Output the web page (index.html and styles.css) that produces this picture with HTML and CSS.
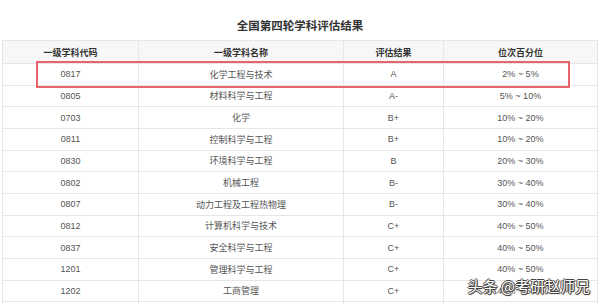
FILE: index.html
```html
<!DOCTYPE html>
<html lang="zh">
<head>
<meta charset="utf-8">
<link rel="stylesheet" href="styles.css">
</head>
<body>
<div class="page">
  <h1 class="title">全国第四轮学科评估结果</h1>
  <table class="grid">
    <colgroup>
      <col class="c1"><col class="c2"><col class="c3"><col class="c4">
    </colgroup>
    <thead>
      <tr><th>一级学科代码</th><th>一级学科名称</th><th>评估结果</th><th>位次百分位</th></tr>
    </thead>
    <tbody>
      <tr><td>0817</td><td>化学工程与技术</td><td>A</td><td>2% ~ 5%</td></tr>
      <tr><td>0805</td><td>材料科学与工程</td><td>A-</td><td>5% ~ 10%</td></tr>
      <tr><td>0703</td><td>化学</td><td>B+</td><td>10% ~ 20%</td></tr>
      <tr><td>0811</td><td>控制科学与工程</td><td>B+</td><td>10% ~ 20%</td></tr>
      <tr><td>0830</td><td>环境科学与工程</td><td>B</td><td>20% ~ 30%</td></tr>
      <tr><td>0802</td><td>机械工程</td><td>B-</td><td>30% ~ 40%</td></tr>
      <tr><td>0807</td><td>动力工程及工程热物理</td><td>B-</td><td>30% ~ 40%</td></tr>
      <tr><td>0812</td><td>计算机科学与技术</td><td>C+</td><td>40% ~ 50%</td></tr>
      <tr><td>0837</td><td>安全科学与工程</td><td>C+</td><td>40% ~ 50%</td></tr>
      <tr><td>1201</td><td>管理科学与工程</td><td>C+</td><td>40% ~ 50%</td></tr>
      <tr><td>1202</td><td>工商管理</td><td>C+</td><td>40% ~ 50%</td></tr>
      <tr><td>&nbsp;</td><td></td><td></td><td></td></tr>
    </tbody>
  </table>
  <div class="highlight"></div>
  <div class="watermark">头条 @考研赵师兄</div>
</div>
</body>
</html>
```
FILE: styles.css
```css
html, body {
  margin: 0;
  padding: 0;
  background: #ffffff;
}
body {
  width: 600px;
  height: 304px;
  overflow: hidden;
  font-family: "Liberation Sans", "Noto Sans CJK SC", sans-serif;
}
.page {
  position: relative;
  width: 600px;
  height: 304px;
  overflow: hidden;
}
.title {
  margin: 0;
  height: 40px;
  box-sizing: border-box;
  padding-top: 18px;
  text-align: center;
  font-size: 11.5px;
  line-height: 16px;
  font-weight: bold;
  color: #333333;
}
.grid {
  margin-left: 2px;
  width: 595px;
  border-collapse: collapse;
  table-layout: fixed;
}
.c1 { width: 136px; }
.c2 { width: 205px; }
.c3 { width: 100px; }
.c4 { width: 154px; }
.grid th,
.grid td {
  border: 1px solid #e6e6e6;
  padding: 0;
  text-align: center;
  font-size: 9px;
  white-space: nowrap;
}
.grid thead tr {
  height: 23px;
}
.grid th {
  background: #f7f7f7;
  color: #333333;
  font-weight: bold;
}
.grid tbody tr {
  height: 21.67px;
}
.grid td {
  color: #555555;
}
.highlight {
  position: absolute;
  left: 36px;
  top: 61px;
  width: 534px;
  height: 27px;
  box-sizing: border-box;
  border: 2px solid #e8646d;
}
.watermark {
  position: absolute;
  right: 10px;
  top: 276px;
  font-family: "Noto Sans CJK SC", sans-serif;
  font-size: 15px;
  line-height: 20px;
  color: #ffffff;
  text-shadow: 1px 0 0 #444, -1px 0 0 #444, 0 1px 0 #444, 0 -1px 0 #444, 1px 1px 1px #444;
}
```
